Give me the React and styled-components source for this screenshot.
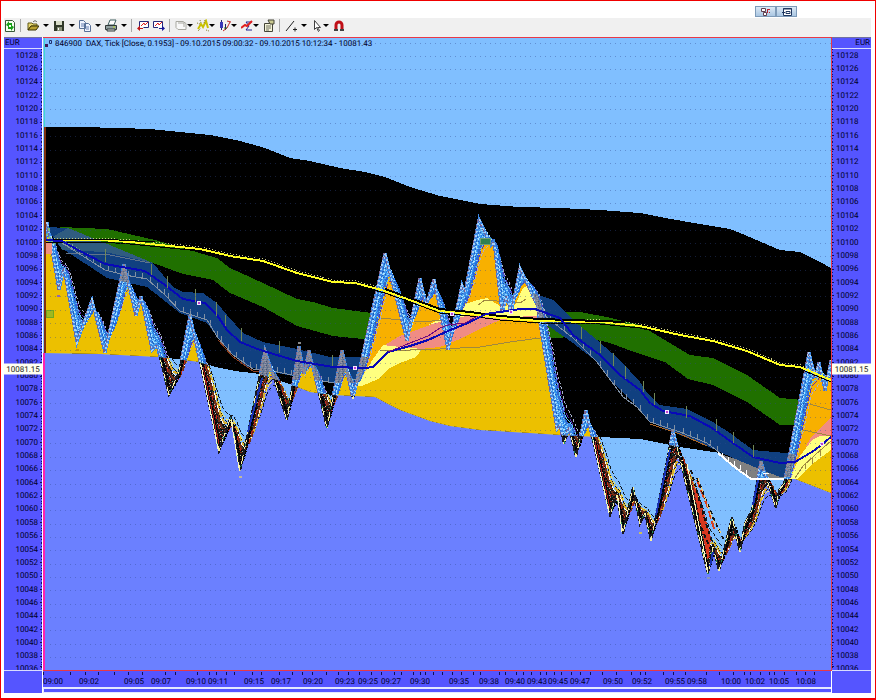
import styled, { createGlobalStyle, css } from "styled-components";

const GlobalStyle = createGlobalStyle`
  * {
    box-sizing: border-box;
  }

  body {
    margin: 0;
    background: #fff;
    font-family: Roboto, "Liberation Sans", Arial, sans-serif;
    font-size: 8px;
    line-height: 10px;
    color: #000028;
    text-rendering: geometricPrecision;
  }

  button {
    display: flex;
    align-items: center;
    justify-content: center;
    padding: 0;
    border: 0;
    background: none;
  }
`;

const violet = "#5555ff";
const sky = "#80bfff";
const periwinkle = "#6b80ff";

const Frame = styled.div`
  display: flex;
  flex-direction: column;
  min-height: 100vh;
  padding: 0 3px 5px;
  border: 1px solid #f00000;
  border-bottom-width: 2px;
`;

const TitleStrip = styled.header`
  display: flex;
  justify-content: flex-end;
  height: 17px;
  padding: 5px 75px 0 0;
`;

const WindowButton = styled.button`
  && {
    width: 21px;
    height: 11px;
    border: 1px solid #7d9ab8;
    background: linear-gradient(#dce9f5, #a9c6e2);
  }
`;

const Toolbar = styled.div`
  display: flex;
  align-items: center;
  height: 19px;
  margin-right: 1px;
  padding-bottom: 4px;
  background: #f0f0f0;
`;

const ToolGroup = styled.div`
  display: flex;
  align-items: center;
  gap: 4px;
  padding: 0 4px 0 ${({ $start }) => $start || 0}px;
  ${({ $divided }) =>
    $divided &&
    css`
      border-left: 1px solid #a8a8a8;
      height: 13px;
    `}
`;

const ToolItem = styled.div`
  display: flex;
  gap: ${({ $gap }) => $gap || 0}px;
`;

const IconButton = styled.button`
  width: 12px;
  height: 14px;
`;

const CaretButton = styled.button`
  width: 6px;
  height: 14px;

  &::after {
    content: "";
    border: 3px solid transparent;
    border-top-color: #000;
    border-bottom: 0;
  }
`;

const Workspace = styled.main`
  flex: 1;
  display: grid;
  grid-template-columns: 39px minmax(0, 1fr) 39px;
  grid-template-rows: minmax(0, 1fr) 22px;
  margin-right: 1px;
  background: ${violet};
`;

const PriceAxis = styled.section`
  position: relative;
  display: flex;
  flex-direction: column;
  min-height: 0;
  overflow: hidden;
  border-bottom: 1px solid #d8dcff;
  ${({ $side }) => ($side === "left" ? "border-right: 1px solid #fff;" : "")}
`;

const AxisTitle = styled.h2`
  height: 12px;
  margin: 0;
  padding: 0 1px;
  border-top: 1px solid #7070a0;
  border-bottom: 1px solid #d8dcff;
  font-size: 8px;
  font-weight: normal;
  line-height: 10px;
  text-align: ${({ $side }) => $side};
`;

const PriceList = styled.ol`
  position: relative;
  flex: 1;
  display: grid;
  grid-template-rows: repeat(46, minmax(0, 1fr)) 7px;
  margin: 0;
  padding: 0;
  list-style: none;
  overflow: hidden;
`;

const PriceLabel = styled.li`
  display: flex;
  align-items: center;
  justify-content: flex-end;
  flex-direction: ${({ $side }) => ($side === "left" ? "row" : "row-reverse")};
  gap: 2px;
  min-height: 0;

  &:last-child {
    align-items: flex-start;
    padding-top: 1px;
  }

  &::after {
    content: "";
    align-self: stretch;
    width: 2px;
    background:
      linear-gradient(#101050, #101050) center / 2px 1px no-repeat,
      repeating-linear-gradient(#101070 0 1px, transparent 1px 3px) ${({ $side }) =>
        $side === "left" ? "right" : "left"} / 1px 100% no-repeat;
  }
`;

const PriceFlag = styled.output`
  position: absolute;
  left: 0;
  right: 0;
  display: flex;
  align-items: center;
  justify-content: center;
  height: 11px;
  background: #fffff0;
  color: #222;
  transform: translateY(-50%);
`;

const Plot = styled.section`
  position: relative;
  min-width: 0;
  min-height: 0;
  border: solid #e83848;
  border-width: 1px 1px 1px 0;
  overflow: hidden;
`;

const ChartCanvas = styled.svg`
  position: absolute;
  inset: 0;
  width: 100%;
  height: 100%;
`;

const PlotCaption = styled.h1`
  position: relative;
  display: flex;
  align-items: center;
  gap: 3px;
  margin: 1px 2px;
  font-size: 8px;
  font-weight: normal;
  line-height: 10px;
  white-space: pre;
`;

const TimeAxis = styled.footer`
  min-width: 0;
  overflow: hidden;
  border-right: 1px solid #fff;
`;

const TickRow = styled.div`
  display: flex;
  height: 6px;
  padding-top: 1px;
`;

const Tick = styled.span`
  flex: ${({ $span }) => $span} 0 0;
  height: 3px;
  border-left: 1px solid #101050;
`;

const TimeRow = styled.ol`
  display: flex;
  height: 10px;
  margin: 0;
  padding: 0;
  list-style: none;
`;

const TimeLabel = styled.li`
  flex: ${({ $span }) => $span} 0 0;
  min-width: 0;
  white-space: nowrap;
`;

const ScrollTrack = styled.div`
  height: 6px;
  border: solid #e4e8ff;
  border-width: 2px 0 1px 1px;
`;

const Corner = styled.div`
  ${({ $side }) => ($side === "left" ? "border-right: 1px solid #fff;" : "")}
`;

const X0 = 43;
const X1 = 831;
const Y0 = 38;
const Y1 = 670;

const prices = Array.from({ length: 47 }, (_, i) => 10128 - i * 2);
const lastPrice = 10081.15;

const times = [
  ["09:00", 43], ["09:02", 79], ["09:05", 124], ["09:07", 151], ["09:10", 186],
  ["09:11", 208], ["09:15", 244], ["09:17", 271], ["09:20", 303], ["09:23", 335],
  ["09:25", 358], ["09:27", 381], ["09:30", 410], ["09:35", 449], ["09:38", 479],
  ["09:40", 505], ["09:43", 527], ["09:45", 548], ["09:47", 570], ["09:50", 603],
  ["09:52", 632], ["09:55", 665], ["09:58", 687], ["10:00", 721], ["10:02", 745],
  ["10:05", 769], ["10:08", 796],
];
const timeStarts = times.map(([, x]) => x);

const ticks = [
  51, 79, 94, 107, 124, 138, 152, 176, 185, 208, 220, 227, 236, 244, 262, 271, 290,
  303, 312, 322, 336, 348, 358, 369, 381, 390, 404, 410, 422, 428, 433, 440, 449,
  459, 468, 479, 486, 506, 511, 522, 528, 536, 545, 550, 558, 564, 574, 583, 592,
  604, 618, 634, 642, 647, 665, 675, 687, 708, 721, 736, 746, 752, 762, 770, 775,
  784, 796, 805, 814,
];

const spanOf = (list, i) => (i + 1 < list.length ? list[i + 1] : X1) - list[i];

const upper = "44,127 80,127 120,128 150,129 180,132 210,135 240,141 265,148 290,158 310,161 340,168 365,172 385,177 410,187 440,196 480,204 520,207 560,208 600,210 640,213 665,218 700,224 730,229 745,235 780,250 800,252 820,262 831,268";
const lower = "44,353 100,354 160,357 200,362 215,367 235,371 260,374 275,379 292,385 310,392 333,395 355,396 375,397 388,404 400,410 430,421 450,426 480,430 530,433 560,435 600,437 640,439 680,447 700,450 720,453 732,465 751,479 795,479 831,493";
const reverse = (points) => points.split(" ").reverse().join(" ");

const yellowLine = "44,240 100,240 130,242 160,245 200,249 213,252 230,256 263,261 297,273 333,282 355,283 385,291 410,300 440,311 470,314 500,318 540,321 600,322 640,326 680,335 713,341 747,351 780,365 800,367 831,380";
const blueLine = "44,240 62,241 78,250 105,264 145,271 165,285 183,299 205,303 217,315 227,330 240,342 260,350 297,361 333,367 365,368 373,367 388,352 410,346 428,340 448,331 470,322 486,314 520,309 535,309 560,318 573,335 600,355 620,375 640,390 650,403 663,411 690,416 712,428 733,443 753,457 780,463 795,462 815,450 831,437";
const grayLines = [
  "62,243 105,270 125,275 147,279 165,295 180,311 207,320 218,338 233,355 253,369 267,370 297,376 333,383 353,379 362,379 378,366 388,356",
  "540,312 573,338 597,362 623,397 637,407 650,422 680,432 707,443 720,453",
];

const greenBands = [
  "60,227 107,229 155,240 217,258 230,268 263,283 297,299 313,302 333,308 372,313 368,339 363,339 333,336 297,326 263,307 230,293 213,280 183,274 153,263 105,243 70,238",
  "545,312 580,312 607,317 640,325 660,337 680,349 690,355 713,358 747,375 780,398 802,400 795,425 780,425 747,402 713,385 688,379 665,362 637,353 607,342 580,337 545,338",
];
const blueBands = [
  "46,227 68,228 105,243 153,263 173,287 183,292 203,293 217,303 227,315 243,333 263,342 297,349 330,357 370,357 358,383 333,383 297,377 267,371 247,367 233,355 218,338 207,323 180,313 147,287 107,278 60,247",
  "533,293 553,300 573,320 597,340 620,360 640,382 647,393 660,405 687,409 713,422 730,433 753,450 785,453 800,455 795,477 780,477 757,468 733,458 707,446 680,435 650,422 633,402 610,380 597,362 573,343 540,320",
];

const swings = [
  [44, 240], [47, 222], [59, 290], [64, 268], [77, 342], [92, 300], [105, 353],
  [124, 264], [136, 316], [141, 296], [152, 350], [157, 345], [169, 395],
  [179, 372], [190, 315], [219, 451], [231, 416], [240, 471], [265, 350],
  [272, 372], [287, 420], [299, 346], [304, 374], [309, 350], [327, 428],
  [342, 350], [353, 399], [385, 253], [407, 341], [420, 278], [426, 306],
  [434, 279], [448, 350], [462, 285], [465, 292], [479, 219], [491, 245],
  [494, 242], [502, 313], [507, 296], [511, 314], [520, 268], [537, 305],
  [557, 429], [560, 425], [564, 444], [569, 427], [576, 457], [586, 410],
  [610, 515], [617, 495], [623, 534], [633, 487], [640, 524], [645, 513],
  [651, 541], [673, 430], [708, 574], [713, 547], [719, 571], [732, 517],
  [740, 552], [745, 523], [752, 510], [761, 461], [776, 508], [779, 490],
  [784, 484], [809, 352], [815, 378], [819, 362], [825, 391], [831, 360],
];
const pricePath = swings.map((p) => p.join(",")).join(" ");
const underPrice = `44,670 ${pricePath} 831,670`;

const priceAt = (x) => {
  const i = Math.max(1, swings.findIndex((p) => p[0] >= x));
  const [ax, ay] = swings[i - 1];
  const [bx, by] = swings[i];
  return ay + ((by - ay) * (x - ax)) / (bx - ax);
};

const average = (length) => {
  let value = priceAt(44);
  const points = [];
  for (let x = 44; x <= X1; x += 1) {
    value += (priceAt(x) - value) / length;
    points.push(`${x},${Math.round(value)}`);
  }
  return points.join(" ");
};

const ribbon = `${pricePath} ${reverse(average(8))}`;
const darkRibbon = `${pricePath} ${reverse(average(10))}`;

const brightAverages = [
  [12, "#a8b0cc", 1, "3 2"],
  [10, "#5830b8", 1, "6 2"],
  [9, "#60c8f0", 1],
  [8, "#3068d0", 2, "5 1"],
  [6, "#2080f0", 1, "3 1"],
  [4, "#b0e4ff", 1, "2 2"],
  [3, "#2060c8", 1, "2 2"],
];
const darkAverages = [
  [16, "#101820", 1, "4 2"],
  [13, "#f0e860", 1, "6 2"],
  [12, "#181818", 1, "3 1"],
  [11, "#d8b030", 2, "7 2"],
  [10, "#ffffff", 1, "7 6"],
  [8, "#703018", 2, "6 2"],
  [6, "#c02818", 1, "5 5"],
  [3, "#000", 2, "3 1"],
];

const whiskers = [
  [105, 249, 262], [151, 264, 275], [167, 276, 288], [195, 289, 302], [216, 302, 316],
  [225, 315, 326], [241, 328, 341], [279, 341, 353], [332, 355, 366], [581, 327, 339],
  [600, 341, 353], [613, 353, 366], [625, 366, 379], [643, 381, 392], [654, 393, 405],
  [686, 406, 418], [716, 419, 431], [733, 432, 443], [753, 445, 457],
];
const markers = [[199, 303], [355, 368], [452, 314], [511, 312], [667, 412], [822, 444]];
const specks = [[58, 296, "#9068b0"], [77, 350, "#c89000"], [240, 477, "#c0b8a0"], [299, 343, "#888"], [640, 533, "#c8c060"], [708, 578, "#8898b8"]];

const Lines = ({ set }) =>
  set.map(([length, stroke, width, dash]) => (
    <polyline
      key={length}
      points={average(length)}
      fill="none"
      stroke={stroke}
      strokeWidth={width}
      strokeDasharray={dash}
    />
  ));

const Hatch = ({ id, base, dots, size }) => (
  <pattern id={id} width={size[0]} height={size[1]} patternUnits="userSpaceOnUse">
    <rect width={size[0]} height={size[1]} fill={base} />
    {dots.map(([x, y, fill, w = 1]) => (
      <rect key={`${x}-${y}`} x={x} y={y} width={w} height="1" fill={fill} />
    ))}
  </pattern>
);

const sideTicks = (points) => {
  const list = points.split(" ").map((p) => p.split(",").map(Number));
  const marks = [];
  list.slice(1).forEach(([bx, by], i) => {
    const [ax, ay] = list[i];
    for (let x = ax + 3; x < bx; x += 7) {
      const y = Math.round(ay + ((by - ay) * (x - ax)) / (bx - ax));
      marks.push(`M${x} ${y}v-5`);
    }
  });
  return marks.join("");
};

const TickChart = () => (
  <ChartCanvas
    viewBox={`${X0} ${Y0} ${X1 - X0} ${Y1 - Y0}`}
    preserveAspectRatio="none"
    shapeRendering="crispEdges"
    role="img"
    aria-label="DAX tick chart"
  >
    <defs>
      <clipPath id="above">
        <polygon points={`44,38 ${lower} 831,38`} />
      </clipPath>
      <clipPath id="below">
        <polygon points={`44,670 ${lower} 831,670`} />
      </clipPath>
      <clipPath id="under">
        <polygon points={underPrice} />
      </clipPath>
      <clipPath id="band">
        {blueBands.map((points) => (
          <polygon key={points} points={points} />
        ))}
        <rect x="260" y="335" width="95" height="45" />
      </clipPath>
      <Hatch
        id="bright"
        base="#48a0ec"
        size={[5, 6]}
        dots={[[0, 0, "#98d8ff", 2], [3, 1, "#1c50b0"], [1, 2, "#90d4ff", 2], [4, 3, "#b8e4ff"], [0, 4, "#2058b8"], [2, 4, "#80ccff", 2], [3, 5, "#4880c8"]]}
      />
      <Hatch
        id="dark"
        base="#141414"
        size={[5, 7]}
        dots={[[0, 0, "#c8c8b0"], [3, 1, "#703818", 2], [1, 2, "#000"], [2, 3, "#a0a8a8"], [0, 4, "#802818", 2], [4, 5, "#b0b8b8"], [2, 6, "#285838"]]}
      />
      <Hatch
        id="smoke"
        base="#707c94"
        size={[4, 4]}
        dots={[[0, 0, "#9098a8", 2], [2, 1, "#405070"], [1, 2, "#a098a8"], [3, 3, "#506888"]]}
      />
    </defs>

    <rect x="43" y="38" width="788" height="632" fill={sky} />
    <polygon points={`${upper} ${reverse(lower)}`} fill="#000" />
    {greenBands.map((points) => (
      <polygon key={points} points={points} fill="#207000" />
    ))}
    {blueBands.map((points) => (
      <polygon key={points} points={points} fill="#104080" />
    ))}
    <polygon points="68,228 105,243 153,263 105,252 62,250 54,236" fill="#305c80" />
    <polyline points="66,253 110,255 150,263" fill="none" stroke="#60748c" />
    <polygon points="720,454 733,458 757,468 780,477 795,478 751,479 732,465" fill="#808080" />
    {grayLines.map((points) => (
      <g key={points} fill="none" stroke="#8090a4">
        <polyline points={points} />
        <path d={sideTicks(points)} />
      </g>
    ))}
    <polyline points="218,340 233,357 253,371 267,371" fill="none" stroke="#904020" />
    <polyline points="650,424 680,434 707,446" fill="none" stroke="#b06828" />

    <g clipPath="url(#below)">
      <polygon points={underPrice} fill={periwinkle} />
    </g>
    <g clipPath="url(#above)">
      <g clipPath="url(#under)">
        <rect x="44" y="200" width="787" height="300" fill="#ecc000" />
        <polygon points="360,200 545,200 545,338 510,342 480,347 440,349 385,352 365,380" fill="#f8b000" />
        <polygon points="383,346 400,336 430,325 448,318 480,315 540,315 540,319 500,320 480,329 460,339 440,347 410,350 388,352" fill="#f08c84" />
        <polygon points="357,386 371,362 383,345 400,347 422,349 416,357 400,363 390,368 378,379 362,386" fill="#ffff80" />
        <polygon points="428,325 440,319 462,305 478,300 487,298 500,306 515,305 523,288 530,285 541,305 541,316 505,317 480,313 452,319" fill="#ffff80" />
        <path d="M360 350 375 320 381 318 420 322 445 320M380 351 440 349 480 347 510 342 540 338M478 305 485 300 520 303 526 299" fill="none" stroke="#a08840" />
        <polygon points="796,340 831,340 831,440 796,462" fill="#f8b000" />
        <polygon points="812,436 831,418 831,440 806,446" fill="#f08c84" />
        <polygon points="790,479 800,456 812,440 820,436 831,436 831,450 815,462 803,473 797,479" fill="#ffff80" />
        <path d="M806 403 831 410M803 430 831 436M795 478 803 466 815 455 831 441M805 463v6M812 458v6M820 450v6" fill="none" stroke="#a08840" />
      </g>
    </g>

    <g clipPath="url(#below)">
      <polygon points={darkRibbon} fill="url(#dark)" />
      <Lines set={darkAverages} />
      <polygon points="692,480 702,506 711,538 708,562" fill="#d83820" />
      <path d="M697 480 708 508 715 532" fill="none" stroke="#d84020" strokeWidth="2" strokeDasharray="8 3" />
      <path d="M691 470 705 520 714 548M689 480 700 525 711 550M697 478 715 522 724 540" fill="none" stroke="#141414" strokeWidth="2" strokeDasharray="4 3" />
      <path d="M698 478 712 518 722 535" fill="none" stroke="#f0d080" strokeDasharray="6 3" />
      <polyline points={pricePath} fill="none" stroke="#181820" strokeWidth="2" />
      <polyline points={pricePath} fill="none" stroke="#f8f0a0" strokeDasharray="9 6" />
      <polyline points={pricePath} fill="none" stroke="#208850" strokeDasharray="2 19" />
      <path d="M201 365 218 449M231 420 239 468M593 440 609 513M618 498 622 532M687 464 708 572" fill="none" stroke="#f8f8c0" />
      <path d="M203 367 219 444M595 442 610 508" fill="none" stroke="#a82018" />
      <path d="M248 432 262 378M656 515 670 450M753 505 758 480M710 566 713 552" fill="none" stroke="#1830b0" strokeWidth="2" />
    </g>
    <g clipPath="url(#above)">
      <polygon points={ribbon} fill="url(#bright)" />
      <Lines set={brightAverages} />
      <polyline points={pricePath} fill="none" stroke="#3c88e4" strokeWidth="3" />
      <polyline points={pricePath} fill="none" stroke="#a4d0f8" strokeWidth="2" strokeDasharray="2 2" />
      <polyline points={pricePath} fill="none" stroke="#786090" strokeDasharray="3 2" transform="translate(-1 0)" />
      <g clipPath="url(#band)">
        <polygon points={ribbon} fill="url(#smoke)" />
        <polyline points={pricePath} fill="none" stroke="#8c8898" strokeWidth="2" strokeDasharray="3 1" />
      </g>
    </g>

    <path d="M44 240 62 241 78 250M44 229h6M46 234 56 245" fill="none" stroke="#70c080" strokeWidth="3" strokeDasharray="2 2" />
    <polyline points={yellowLine} fill="none" stroke="#000" transform="translate(0 2)" />
    <polyline points={yellowLine} fill="none" stroke="#c8c880" strokeDasharray="1 2" transform="translate(1 -2)" />
    <polyline points={yellowLine} fill="none" stroke="#ffff20" strokeWidth="2" />
    <polyline points="385,289 410,298 440,309 470,312 500,316 540,319 600,321 625,322" fill="none" stroke="#000" strokeWidth="2" />
    <path d="M44 239H100L155 242" fill="none" stroke="#000" />
    <polyline points={blueLine} fill="none" stroke="#0808b8" strokeWidth="2" />
    <polyline points="388,352 410,343 428,336 440,328 448,325 465,323 478,316" fill="none" stroke="#700880" />
    <polyline points="718,453 732,465 751,479 770,479 784,479" fill="none" stroke="#fff" strokeWidth="2" />
    <path d="M722 457v-4M728 462v-5M734 467v-6M740 471v-6M746 476v-6M763 473h6" stroke="#fff" />
    {whiskers.map(([x, top, bottom]) => (
      <path key={x} d={`M${x} ${top}V${bottom}`} stroke="#708858" />
    ))}
    <rect x="480" y="238" width="10" height="6" fill="#308050" stroke="#70a070" />
    <rect x="46" y="310" width="7" height="7" fill="#a0b820" stroke="#70a820" />
    {markers.map(([x, y]) => (
      <g key={x}>
        <rect x={x - 2} y={y - 2} width="4" height="4" fill="#f0e8ff" />
        <rect x={x - 1} y={y - 1} width="2" height="2" fill="#c040d0" />
      </g>
    ))}
    {specks.map(([x, y, fill]) => (
      <rect key={`${x}-${y}`} x={x - 1} y={y - 1} width="3" height="2" fill={fill} />
    ))}

    {[43, ...prices.map((_, i) => Math.round(56 + i * 13.36))].map((y) => (
      <path key={y} d={`M50 ${y}H831`} stroke="#304890" strokeOpacity="0.4" strokeDasharray="1 4" />
    ))}
    <path d="M45 127V353" stroke="#803010" strokeWidth="2" />
    <rect x="46" y="243" width="6" height="11" fill="#f09080" />
    <path d="M44 38V127" stroke="#40d8d0" />
    <path d="M44 353V670" stroke="#ff20b0" strokeWidth="2" />
  </ChartCanvas>
);

const icons = {
  refresh: (
    <>
      <path d="M1.5 1.5h7l2 2v9h-9z" fill="#f4fff0" stroke="#385838" />
      <path d="M2 6l3-4v2h3v3H7V6H5v2zM10 8l-3 4v-2H4V7h1v1h2V6z" fill="#18a018" />
    </>
  ),
  open: (
    <>
      <path d="M1 11V4h4l1 1h4v2H4z" fill="#e8d870" stroke="#605818" />
      <path d="M1 11l3-4h8l-3 4z" fill="#b8a030" stroke="#383000" />
      <path d="M6 3c2-2 3-1 4 0" fill="none" stroke="#555" />
    </>
  ),
  save: (
    <>
      <path d="M1 2h10v10H1z" fill="#303828" />
      <path d="M3 2h6v4H3z" fill="#d8dcc8" />
      <path d="M4 8h5v4H4z" fill="#889078" />
      <path d="M5 9h1v2H5z" fill="#fff" />
    </>
  ),
  copy: (
    <>
      <path d="M.5 1.5h4l2 2v6h-6zM5.500 4.500h4l2 2v6h-6z" fill="#f0f4ff" stroke="#587098" />
      <path d="M2 5h3M2 7h3M7 8h3M7 10h3" stroke="#6880b0" />
    </>
  ),
  print: (
    <>
      <path d="M3 6l2-5h6l-2 5z" fill="#fff" stroke="#406060" />
      <path d="M.5 6.500h11v4H.5z" fill="#90a0a0" stroke="#303838" />
      <path d="M2 10h8v2H2z" fill="#d8e0e0" stroke="#303838" />
      <path d="M8 8h2" stroke="#c0e020" />
    </>
  ),
  back: (
    <>
      <path d="M2.500 8V2.500h9v6h-5" fill="#fff" stroke="#282878" />
      <path d="M4 7l3-3 1 2 3-3" fill="none" stroke="#e02020" />
      <path d="M0 9.500l3-3V9h3v1H3v2z" fill="#c01818" />
    </>
  ),
  forward: (
    <>
      <path d="M5 8.500H.5v-6h9V8" fill="#fff" stroke="#282878" />
      <path d="M2 7l3-3 1 2 3-3" fill="none" stroke="#e02020" />
      <path d="M12 9.500l-3-3V9H6v1h3v2z" fill="#181898" />
    </>
  ),
  shape: <path d="M1 2.500h7l3 2v6H3l-2-2zM3 4h6v4" fill="#f8f8f8" stroke="#a8a8a0" />,
  spark: (
    <>
      <path d="M1 10L4 5l2 3 3-6 2 7" fill="none" stroke="#c8c000" strokeWidth="2" />
      <path d="M0 4l3 1M3 1l1 3M8 1L7 4M1 12l3-3M9 11l3 1" stroke="#807828" strokeDasharray="1 1" />
    </>
  ),
  candles: (
    <>
      <path d="M2.500 1v10M6.500 5v6" stroke="#202070" />
      <path d="M1 3h3v6H1z" fill="#3838b8" />
      <path d="M4 12l4-3 3-6M8 2l4 1" fill="none" stroke="#c02828" />
      <path d="M5 9h3" stroke="#207020" />
    </>
  ),
  sigma: (
    <>
      <path d="M11 3H5l3 4-3 4h6" fill="none" stroke="#202090" />
      <path d="M0 9l4-3 2 1 5-5" fill="none" stroke="#e02020" strokeWidth="2" />
    </>
  ),
  properties: (
    <>
      <path d="M1.500 4.500h8v8h-8z" fill="#f4f4d8" stroke="#444438" />
      <path d="M5 1h6v4H7z" fill="#c8c890" stroke="#444438" />
      <path d="M3 7h5M3 9h5M3 11h3" stroke="#707060" />
    </>
  ),
  line: <path d="M1 12L9 2M8 10.500h4M10 8.500v4" stroke="#202020" fill="none" />,
  cursor: <path d="M3.500 1.500v9l2-2 2 4 1-1-2-3h3z" fill="#fff" stroke="#404040" />,
  magnet: (
    <>
      <path d="M3 12V6a3 3 0 016 0v6" fill="none" stroke="#c01018" strokeWidth="3" />
      <path d="M1 10h4v2H1zM7 10h4v2H7z" fill="#404040" />
    </>
  ),
};

const Tool = ({ icon, label, menu, gap }) => (
  <ToolItem $gap={gap}>
    <IconButton type="button" aria-label={label}>
      <svg width="12" height="14" viewBox="0 0 12 14" aria-hidden="true">
        {icons[icon]}
      </svg>
    </IconButton>
    {menu && <CaretButton type="button" aria-label={`${label} options`} />}
  </ToolItem>
);

const Scale = ({ side }) => (
  <PriceAxis $side={side}>
    <AxisTitle $side={side}>EUR</AxisTitle>
    <PriceList>
      {prices.map((price) => (
        <PriceLabel key={price} $side={side}>
          {price}
        </PriceLabel>
      ))}
    </PriceList>
    <PriceFlag style={{ top: `${((10131 - lastPrice) / 95) * 100}%` }}>
      {lastPrice.toFixed(2)}
    </PriceFlag>
  </PriceAxis>
);

export default function App() {
  return (
    <Frame>
      <GlobalStyle />
      <TitleStrip>
        <WindowButton type="button" aria-label="Chart windows">
          <svg width="12" height="8" viewBox="0 0 12 8" aria-hidden="true">
            <path d="M1.500 .5h4v3h-4zM3.500 4.500h3v3h-3z" fill="#fff" stroke="#604050" />
            <path d="M7 1.500h3M7.500 1v4M9 4.500h1" stroke="#c02030" fill="none" />
          </svg>
        </WindowButton>
        <WindowButton type="button" aria-label="Dock window">
          <svg width="12" height="8" viewBox="0 0 12 8" aria-hidden="true">
            <path d="M2.500 .5h8v7h-8z" fill="#fff" stroke="#203860" />
            <path d="M2 1h9M1 4.500h3M5 3.500h4v2H5z" stroke="#203860" fill="none" />
          </svg>
        </WindowButton>
      </TitleStrip>
      <Toolbar role="toolbar" aria-label="Chart tools">
        <ToolGroup>
          <Tool icon="refresh" label="Refresh" />
        </ToolGroup>
        <ToolGroup $divided $start={6}>
          <Tool icon="open" label="Open" menu gap={4} />
          <Tool icon="save" label="Save" menu gap={4} />
          <Tool icon="copy" label="Copy" menu gap={4} />
          <Tool icon="print" label="Print" menu gap={4} />
        </ToolGroup>
        <ToolGroup $divided $start={5}>
          <Tool icon="back" label="Previous chart" />
          <Tool icon="forward" label="Next chart" />
        </ToolGroup>
        <ToolGroup $divided $start={5}>
          <Tool icon="shape" label="Shapes" menu />
          <Tool icon="spark" label="Signals" menu />
          <Tool icon="candles" label="Chart type" menu />
          <Tool icon="sigma" label="Indicators" menu />
          <Tool icon="properties" label="Properties" />
        </ToolGroup>
        <ToolGroup $divided $start={5}>
          <Tool icon="line" label="Trend line" menu gap={4} />
          <Tool icon="cursor" label="Pointer" menu />
          <Tool icon="magnet" label="Magnet" />
        </ToolGroup>
      </Toolbar>
      <Workspace>
        <Scale side="left" />
        <Plot>
          <TickChart />
          <PlotCaption>
            <svg width="7" height="8" viewBox="0 0 7 8" aria-hidden="true">
              <path d="M0 4h3v3H0z" fill="#401858" />
              <path d="M4.500 .5h2v3h-2z" fill="none" stroke="#203070" />
            </svg>
            {"846900  DAX, Tick [Close, 0.1953] - 09.10.2015 09:00:32 - 09.10.2015 10:12:34 - 10081.43"}
          </PlotCaption>
        </Plot>
        <Scale side="right" />
        <Corner $side="left" />
        <TimeAxis>
          <TickRow>
            {ticks.map((x, i) => (
              <Tick key={x} $span={spanOf(ticks, i)} />
            ))}
          </TickRow>
          <TimeRow>
            {times.map(([label], i) => (
              <TimeLabel key={label} $span={spanOf(timeStarts, i)}>
                {label}
              </TimeLabel>
            ))}
          </TimeRow>
          <ScrollTrack />
        </TimeAxis>
        <Corner $side="right" />
      </Workspace>
    </Frame>
  );
}
